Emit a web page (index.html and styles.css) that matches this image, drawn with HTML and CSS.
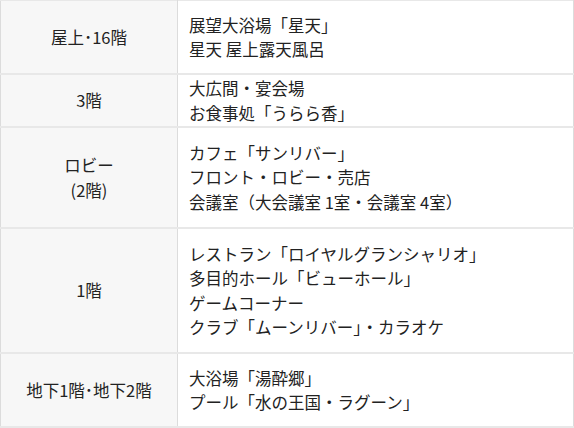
FILE: index.html
```html
<!DOCTYPE html>
<html lang="ja">
<head>
<meta charset="utf-8">
<link rel="stylesheet" href="styles.css">
</head>
<body>
<table class="floors">
  <tr class="r1">
    <th>屋上･16階</th>
    <td>展望大浴場「星天」<br>星天 屋上露天風呂</td>
  </tr>
  <tr class="r2">
    <th>3階</th>
    <td>大広間・宴会場<br>お食事処「うらら香」</td>
  </tr>
  <tr class="r3">
    <th>ロビー<br>(2階)</th>
    <td>カフェ「サンリバー」<br>フロント・ロビー・売店<br>会議室（大会議室 1室・会議室 4室）</td>
  </tr>
  <tr class="r4">
    <th>1階</th>
    <td>レストラン「ロイヤルグランシャリオ」<br>多目的ホール「ビューホール」<br>ゲームコーナー<br>クラブ「ムーンリバー」・カラオケ</td>
  </tr>
  <tr class="r5">
    <th>地下1階･地下2階</th>
    <td>大浴場「湯酔郷」<br>プール「水の王国・ラグーン」</td>
  </tr>
</table>
</body>
</html>
```
FILE: styles.css
```css
html, body {
  margin: 0;
  padding: 0;
  background: #fff;
}
.floors {
  border-collapse: collapse;
  width: 574px;
  table-layout: fixed;
  font-family: "Noto Sans CJK JP", "Noto Sans", sans-serif;
  font-size: 16.5px;
  line-height: 24.5px;
  color: #222;
}
.floors th,
.floors td {
  border-top: 2px solid #e8e8e8;
  border-bottom: 2px solid #e8e8e8;
  border-left: 1px solid #dcdcdc;
  border-right: 1px solid #dcdcdc;
  vertical-align: middle;
  padding: 0;
}
.floors th {
  width: 176px;
  background: #f7f7f7;
  font-weight: normal;
  text-align: center;
}
.floors td {
  background: #fff;
  text-align: left;
  padding-left: 11px;
}
.r1 th, .r1 td { border-top-width: 1px; height: 72px; }
.r2 th, .r2 td { height: 51px; }
.r3 th, .r3 td { height: 99px; }
.r4 th, .r4 td { height: 123px; }
.r5 th, .r5 td { height: 72px; }
```
